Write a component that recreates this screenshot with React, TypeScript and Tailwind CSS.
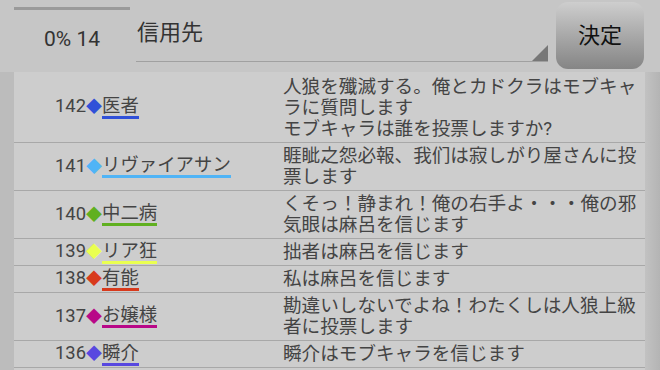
import React, { FC } from "react";

type Vote = {
  no: number;
  name: string;
  color: string;
  lines: string[];
};

const votes: Vote[] = [
  {
    no: 142,
    name: "医者",
    color: "#3050d8",
    lines: ["人狼を殲滅する。俺とカドクラはモブキャ", "ラに質問します", "モブキャラは誰を投票しますか?"],
  },
  {
    no: 141,
    name: "リヴァイアサン",
    color: "#50b4f6",
    lines: ["睚眦之怨必報、我们は寂しがり屋さんに投", "票します"],
  },
  {
    no: 140,
    name: "中二病",
    color: "#60b020",
    lines: ["くそっ！静まれ！俺の右手よ・・・俺の邪", "気眼は麻呂を信じます"],
  },
  { no: 139, name: "リア狂", color: "#eaff50", lines: ["拙者は麻呂を信じます"] },
  { no: 138, name: "有能", color: "#d83a1c", lines: ["私は麻呂を信じます"] },
  {
    no: 137,
    name: "お嬢様",
    color: "#b80888",
    lines: ["勘違いしないでよね！わたくしは人狼上級", "者に投票します"],
  },
  { no: 136, name: "瞬介", color: "#5848e0", lines: ["瞬介はモブキャラを信じます"] },
];

const font = { fontFamily: "Roboto, 'Noto Sans CJK JP', sans-serif" };

const App: FC = () => {
  return (
    <div className="w-[660px] h-[370px] overflow-hidden bg-[#c6c6c6] text-[#444]" style={font}>
      {/* header */}
      <div className="flex h-[72px]">
        <div className="ml-[14px] w-[116px] flex flex-col">
          <div className="mt-[7px] h-[3px] bg-[#9a9a9a]" />
          <div className="flex-1 flex items-center justify-center pb-[2px] text-[21px] text-[#333]">0% 14</div>
        </div>
        <div className="ml-[6px] w-[412px] relative border-b border-[#a0a0a0] mb-[10px]">
          <div className="pt-[19px] pl-[1px] text-[22px] leading-[28px] text-[#333]">信用先</div>
          <div className="absolute right-0 bottom-0 w-0 h-0 border-l-[16px] border-l-transparent border-b-[16px] border-b-[#777]" />
        </div>
        <button className="ml-[8px] mt-[2px] w-[88px] h-[67px] rounded-[12px] bg-gradient-to-b from-[#cecece] to-[#858585] text-[22px] text-[#111] flex items-center justify-center">
          決定
        </button>
      </div>

      {/* list */}
      <div className="flex">
        <div className="w-[14px] bg-[#bcbcbc] h-[298px]" />
        <div className="w-[631px] bg-[#cdcdcd]">
          {votes.map((v, idx) => (
            <div key={v.no} className="flex border-b border-[#a8a8a8]">
              <div className="w-[269px] flex items-center pl-[41px] text-[18.4px] leading-[20px]">
                <span className="pb-[2px]">{v.no}</span>
                <span className="text-[16px] leading-none" style={{ color: v.color }}>
                  ◆
                </span>
                <span className="border-b-[3px] leading-[20px]" style={{ borderColor: v.color }}>
                  {v.name}
                </span>
              </div>
              <div
                className={
                  idx === 0
                    ? "flex-1 pt-[4.5px] pb-[2.5px] text-[18.6px] leading-[21px] whitespace-nowrap"
                    : "flex-1 py-[2.5px] text-[18.6px] leading-[21px] whitespace-nowrap"
                }
              >
                {v.lines.map((l, i) => (
                  <div key={i}>{l}</div>
                ))}
              </div>
            </div>
          ))}
        </div>
        <div className="w-[15px] bg-gradient-to-r from-[#c2c2c2] to-[#b4b4b4] h-[298px]" />
      </div>
    </div>
  );
};

export default App;
